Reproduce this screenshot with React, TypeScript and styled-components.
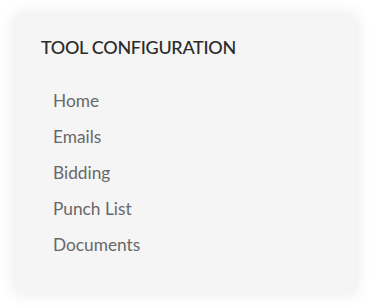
import React from "react";
import styled, { createGlobalStyle } from "styled-components";

const GlobalStyle = createGlobalStyle`
  body {
    margin: 0;
    background: #ffffff;
    font-family: Lato, "Open Sans", sans-serif;
  }
`;

const Page = styled.div`
  padding: 15px;
`;

const Card = styled.section`
  width: 341px;
  box-sizing: border-box;
  padding: 21px 26px 30px;
  background: #f5f5f5;
  border-radius: 4px;
  box-shadow: 0 0 16px rgba(0, 0, 0, 0.1);
`;

const Title = styled.h2`
  margin: 0;
  font-size: 18px;
  line-height: 22px;
  font-weight: 500;
  color: #2b2b2b;
  text-transform: uppercase;
  letter-spacing: -0.3px;
`;

const Menu = styled.ul`
  list-style: none;
  margin: 25px 0 0;
  padding: 0 0 0 12px;
`;

const MenuItem = styled.li`
  font-size: 17.3px;
  line-height: 36px;
  color: #686868;
  cursor: pointer;
`;

const items = ["Home", "Emails", "Bidding", "Punch List", "Documents"];

export default function App() {
  return (
    <>
      <GlobalStyle />
      <Page>
        <Card>
          <Title>Tool Configuration</Title>
          <Menu>
            {items.map((item) => (
              <MenuItem key={item}>{item}</MenuItem>
            ))}
          </Menu>
        </Card>
      </Page>
    </>
  );
}
